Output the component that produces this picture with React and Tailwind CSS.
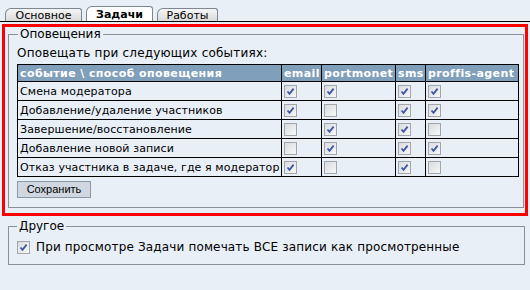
import React from 'react';

const rows = [
  { name: 'Смена модератора', marks: [true, true, true, true] },
  { name: 'Добавление/удаление участников', marks: [true, false, true, true] },
  { name: 'Завершение/восстановление', marks: [false, true, true, false] },
  { name: 'Добавление новой записи', marks: [false, true, true, true] },
  { name: 'Отказ участника в задаче, где я модератор', marks: [true, false, true, false] },
];

const methods = [
  { name: 'email', w: 'w-[40px]' },
  { name: 'portmonet', w: 'w-[74px]' },
  { name: 'sms', w: 'w-[30px]' },
  { name: 'proffis-agent', w: 'w-[93px]' },
];

function Box({ checked }) {
  return (
    <span className="inline-flex shrink-0 w-[13px] h-[13px] border border-[#a2a7ad] bg-linear-to-br from-[#d9dcdf] to-[#f7f7f7] items-center justify-center">
      {checked && (
        <svg width="11" height="11" viewBox="0 0 11 11">
          <path d="M2.5 5.5 L4.5 7.8 L8.6 2.6" fill="none" stroke="#3d56a8" strokeWidth="1.8" />
        </svg>
      )}
    </span>
  );
}

function Tab({ label, active, w }) {
  return (
    <div
      className={
        'flex items-center justify-center border border-b-0 border-[#7d8792] rounded-tl-[6px] rounded-tr-[3px] ' +
        (active ? 'h-[15px] bg-white font-bold' : 'h-[13px] bg-linear-to-b from-[#f6f6f6] to-[#dadada]')
      }
      style={{ width: w }}
    >
      {label}
    </div>
  );
}

export default function App() {
  return (
    <div className="w-[530px] h-[290px] bg-[#e8eff7] font-['DejaVu_Sans',sans-serif] text-[11px] leading-[13px] text-black overflow-hidden">
      {/* tabs */}
      <div className="flex items-end gap-[4px] h-[22px] pl-[5px] border-b border-black">
        <Tab label="Основное" w={77} />
        <Tab label="Задачи" w={67} active />
        <Tab label="Работы" w={61} />
      </div>

      {/* notifications */}
      <div className="mt-[2px] mx-[2px] border-[3px] border-[#ff0000] px-[3px] pb-[5px]">
        <fieldset className="border border-[#8c9196] pl-[8px] pr-[4px] pb-[9px]">
          <legend className="ml-[1px] px-[2px] text-[12px] leading-[14px]">Оповещения</legend>
          <div className="mt-[5px] mb-[4px] text-[12px] leading-[14px] tracking-[0.2px]">Оповещать при следующих событиях:</div>
          <table className="table-fixed w-[501px] border-collapse border border-black">
            <thead>
              <tr className="bg-[#7f9fba] text-white h-[17px] tracking-[0.4px]">
                <th className="w-[264px] border border-black text-left pl-[2px] font-bold whitespace-nowrap">событие \ способ оповещения</th>
                {methods.map((m) => (
                  <th key={m.name} className={m.w + ' border border-black text-left pl-[2px] font-bold whitespace-nowrap'}>{m.name}</th>
                ))}
              </tr>
            </thead>
            <tbody>
              {rows.map((r) => (
                <tr key={r.name} className="h-[19px]">
                  <td className="border border-black pl-[2px] whitespace-nowrap tracking-[0.1px]">{r.name}</td>
                  {r.marks.map((c, i) => (
                    <td key={i} className="border border-black pl-[2px] align-middle">
                      <div className="flex"><Box checked={c} /></div>
                    </td>
                  ))}
                </tr>
              ))}
            </tbody>
          </table>
          <button className="mt-[4px] w-[74px] h-[17px] border border-[#8a97a6] bg-[#d0d7e0] font-['Liberation_Sans',sans-serif] text-[11px] leading-[15px]">
            Сохранить
          </button>
        </fieldset>
      </div>

      {/* other */}
      <fieldset className="mt-[3px] ml-[8px] mr-[5px] border border-[#8c9196] pl-[8px] pb-[10px] text-[12px] leading-[14px]">
        <legend className="px-[2px]">Другое</legend>
        <label className="flex items-center gap-[6px] mt-[7px]">
          <Box checked />
          <span className="tracking-[0.15px]">При просмотре Задачи помечать ВСЕ записи как просмотренные</span>
        </label>
      </fieldset>
    </div>
  );
}
